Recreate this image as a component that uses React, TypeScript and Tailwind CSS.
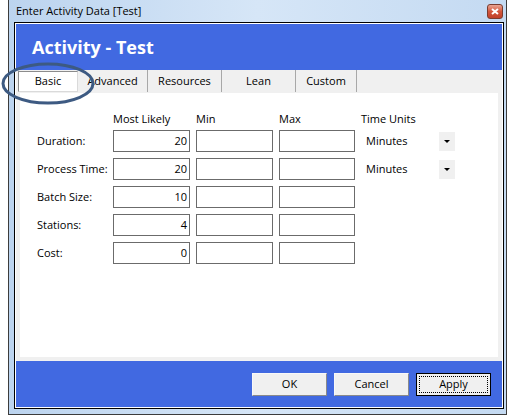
import React from 'react'

const font = { fontFamily: '"Open Sans", "Noto Sans", sans-serif' }

const tabs = [
    { name: 'Basic', w: 'w-[60px]', active: true },
    { name: 'Advanced', w: 'w-[70px]' },
    { name: 'Resources', w: 'w-[74px]' },
    { name: 'Lean', w: 'w-[74px]' },
    { name: 'Custom', w: 'w-[61px]' },
]

const rows = [
    { label: 'Duration:', value: '20', units: true },
    { label: 'Process Time:', value: '20', units: true },
    { label: 'Batch Size:', value: '10' },
    { label: 'Stations:', value: '4' },
    { label: 'Cost:', value: '0' },
]

const cols = 'grid grid-cols-[70px_77px_77px_76px_auto] gap-x-[6px] items-center'

const Box: React.FC<{ value?: string }> = ({ value }) => (
    <div className="h-[22px] border border-[#6b6b6b] bg-white flex items-center justify-end pr-[2px] text-[11px] text-black">
        {value}
    </div>
)

const Units: React.FC = () => (
    <div className="h-[22px] flex items-center justify-between pl-[5px] w-[94px]">
        <span className="text-[11px] text-black">Minutes</span>
        <div className="w-[16px] h-[19px] bg-[#f0f0f0] flex items-center justify-center">
            <div className="w-0 h-0 border-l-[3px] border-r-[3px] border-t-[3px] border-l-transparent border-r-transparent border-t-black" />
        </div>
    </div>
)

const Btn: React.FC<{ label: string; focus?: boolean }> = ({ label, focus }) => (
    <div
        className={
            focus
                ? 'w-[75px] h-[23px] bg-[#f0f0f0] border border-black p-[2px]'
                : 'w-[75px] h-[23px] bg-[#f0f0f0] border border-t-[#f8f8f8] border-l-[#f8f8f8] border-r-[#8a8a8a] border-b-[#8a8a8a]'
        }
    >
        <div
            className={
                focus
                    ? 'w-full h-full border border-dotted border-black flex items-center justify-center text-[11px] text-black'
                    : 'w-full h-full flex items-center justify-center text-[11px] text-black'
            }
        >
            {label}
        </div>
    </div>
)

export default function App() {
    return (
        <div className="relative w-[510px] h-[415px] bg-white overflow-hidden" style={font}>
            {/* window frame */}
            <div className="ml-[8px] w-[499px] h-[415px] border-l border-r border-b border-[#3c3c3c] bg-gradient-to-r from-[#bcd4ef] via-[#d6e6f7] to-[#c4daf2] pl-[5px] pr-[2px] pb-[5px] flex flex-col">
                <div className="h-[22px] flex items-center justify-between">
                    <span className="pl-[2px] text-[11px] text-black">Enter Activity Data [Test]</span>
                    <div className="mr-[1px] mt-[1px] w-[16px] h-[15px] rounded-[3px] border border-[#7a3c30] bg-gradient-to-b from-[#e8a493] via-[#d2563c] to-[#c1402a] flex items-center justify-center">
                        <svg width="8" height="7" viewBox="0 0 8 7">
                            <path d="M1 1 L7 6 M7 1 L1 6" stroke="white" strokeWidth="2" />
                        </svg>
                    </div>
                </div>

                {/* client area */}
                <div className="flex-1 border border-black bg-white p-[1px] flex flex-col">
                    <div className="h-[46px] bg-[#4169e1] flex items-center pl-[16px]">
                        <span className="text-white font-bold text-[18px]">Activity - Test</span>
                    </div>

                    <div className="bg-[#f0f0f0] flex flex-col px-[4px] pb-[4px]">
                        <div className="h-[23px] flex -ml-[2px]">
                            {tabs.map((t) => (
                                <div
                                    key={t.name}
                                    className={
                                        t.active
                                            ? `${t.w} h-[21px] mt-[1px] bg-white border border-t-[#8c8c8c] border-l-[#8c8c8c] border-r-[#dadada] border-b-[#dadada] flex items-center justify-center text-[11px] text-black`
                                            : `${t.w} h-[22px] border-r border-[#a8a8a8] flex items-center justify-center text-[11px] text-black`
                                    }
                                >
                                    {t.name}
                                </div>
                            ))}
                        </div>

                        <div className="h-[264px] bg-white pt-[18px] pl-[17px] flex flex-col gap-[6px]">
                            <div className={`${cols} h-[16px] -mb-[3px] text-[11px] text-black`}>
                                <div />
                                <div>Most Likely</div>
                                <div>Min</div>
                                <div>Max</div>
                                <div>Time Units</div>
                            </div>
                            {rows.map((r) => (
                                <div key={r.label} className={cols}>
                                    <div className="text-[11px] text-black whitespace-nowrap">{r.label}</div>
                                    <Box value={r.value} />
                                    <Box />
                                    <Box />
                                    {r.units ? <Units /> : <div />}
                                </div>
                            ))}
                        </div>
                    </div>

                    <div className="flex-1 bg-[#4169e1] flex justify-end items-start pt-[12px] pr-[11px] gap-[7px]">
                        <Btn label="OK" />
                        <Btn label="Cancel" />
                        <Btn label="Apply" focus />
                    </div>
                </div>
            </div>

            {/* annotation circle */}
            <svg className="absolute left-0 top-0 pointer-events-none" width="510" height="415">
                <ellipse cx="48" cy="83.5" rx="45" ry="19.5" fill="none" stroke="#3d5a82" strokeWidth="3" />
            </svg>
        </div>
    )
}
